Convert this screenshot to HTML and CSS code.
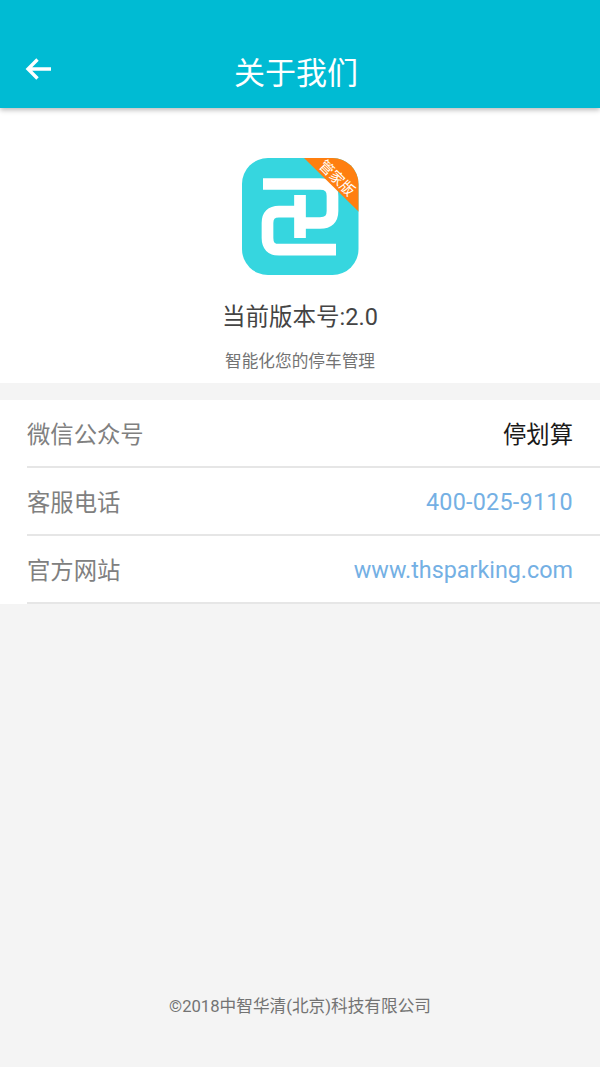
FILE: index.html
```html
<!DOCTYPE html>
<html lang="zh-CN">
<head>
<meta charset="utf-8">
<title>关于我们</title>
<link rel="stylesheet" href="styles.css">
</head>
<body>
<div class="page">
  <header class="topbar">
    <svg class="back" width="30" height="24" viewBox="0 0 30 24"><path d="M27 12H4M13.500 2.500 4 12l9.500 9.500" fill="none" stroke="#fff" stroke-width="3.400"/></svg>
    <h1 class="title">关于我们</h1>
  </header>
  <section class="about">
    <svg class="logo" width="117" height="117" viewBox="0 0 117 117">
      <defs><clipPath id="rounded"><rect width="116.500" height="117" rx="26"/></clipPath></defs>
      <g clip-path="url(#rounded)">
        <rect width="117" height="117" fill="#36d6df"/>
        <path d="M21 26H78Q90.500 26 90.500 38V53Q90.500 65 78 65H60" fill="none" stroke="#fff" stroke-width="11.700"/>
        <path d="M58 37V80" fill="none" stroke="#fff" stroke-width="11.700"/>
        <path d="M58 53.700H37Q25.500 53.700 25.500 65V80Q25.500 91.700 37 91.700H94" fill="none" stroke="#fff" stroke-width="11.700"/>
        <path d="M62 0H117V54Z" fill="#ff7f0f"/>
        <text class="badge-text" x="95" y="25" transform="rotate(45 95 20)" text-anchor="middle">管家版</text>
      </g>
    </svg>
    <p class="version">当前版本号:2.0</p>
    <p class="slogan">智能化您的停车管理</p>
  </section>
  <section class="list">
    <div class="row"><span class="label">微信公众号</span><span class="value">停划算</span></div>
    <div class="row"><span class="label">客服电话</span><span class="value link phone">400-025-9110</span></div>
    <div class="row"><span class="label">官方网站</span><span class="value link">www.thsparking.com</span></div>
  </section>
  <footer class="copyright">©2018中智华清(北京)科技有限公司</footer>
</div>
</body>
</html>
```
FILE: styles.css
```css
* { box-sizing: border-box; }
html, body { margin: 0; padding: 0; }
body {
  font-family: Roboto, "Noto Sans CJK SC", sans-serif;
  background: #f4f4f4;
}
.page {
  width: 600px;
  height: 1067px;
  display: flex;
  flex-direction: column;
  overflow: hidden;
}
.topbar {
  flex: none;
  height: 108px;
  background: #00bbd3;
  box-shadow: 0 2px 5px rgba(0, 0, 0, .28);
  display: flex;
  align-items: flex-end;
  justify-content: center;
  padding: 0 8px 12px 0;
  position: relative;
  z-index: 1;
}
.back { position: absolute; left: 24px; top: 57px; }
.title {
  margin: 0;
  font-size: 31px;
  line-height: 44px;
  font-weight: 400;
  color: #fff;
}
.about {
  flex: none;
  height: 275px;
  background: #fff;
  display: flex;
  flex-direction: column;
  align-items: center;
  padding-top: 50px;
}
.logo { display: block; }
.version {
  margin: 26px 0 0;
  font-size: 23.500px;
  line-height: 32px;
  color: #444;
}
.slogan {
  margin: 17px 0 0;
  font-size: 16.670px;
  line-height: 24px;
  color: #737373;
}
.list {
  flex: none;
  margin-top: 17px;
  background: #fff;
  padding-left: 27px;
}
.row {
  height: 68px;
  padding: 0 27px 0 0;
  border-bottom: 2px solid #e6e6e6;
  display: flex;
  align-items: center;
  justify-content: space-between;
  font-size: 23.330px;
}
.label { color: #808080; }
.value { color: #1a1a1a; }
.link { color: #74b0e4; padding-top: 2px; }
.phone { letter-spacing: .25px; }
.copyright {
  margin-top: auto;
  height: 72px;
  text-align: center;
  font-size: 16.670px;
  line-height: 24px;
  color: #737373;
}
.badge-text { font-size: 14.500px; fill: #fff; }
```
